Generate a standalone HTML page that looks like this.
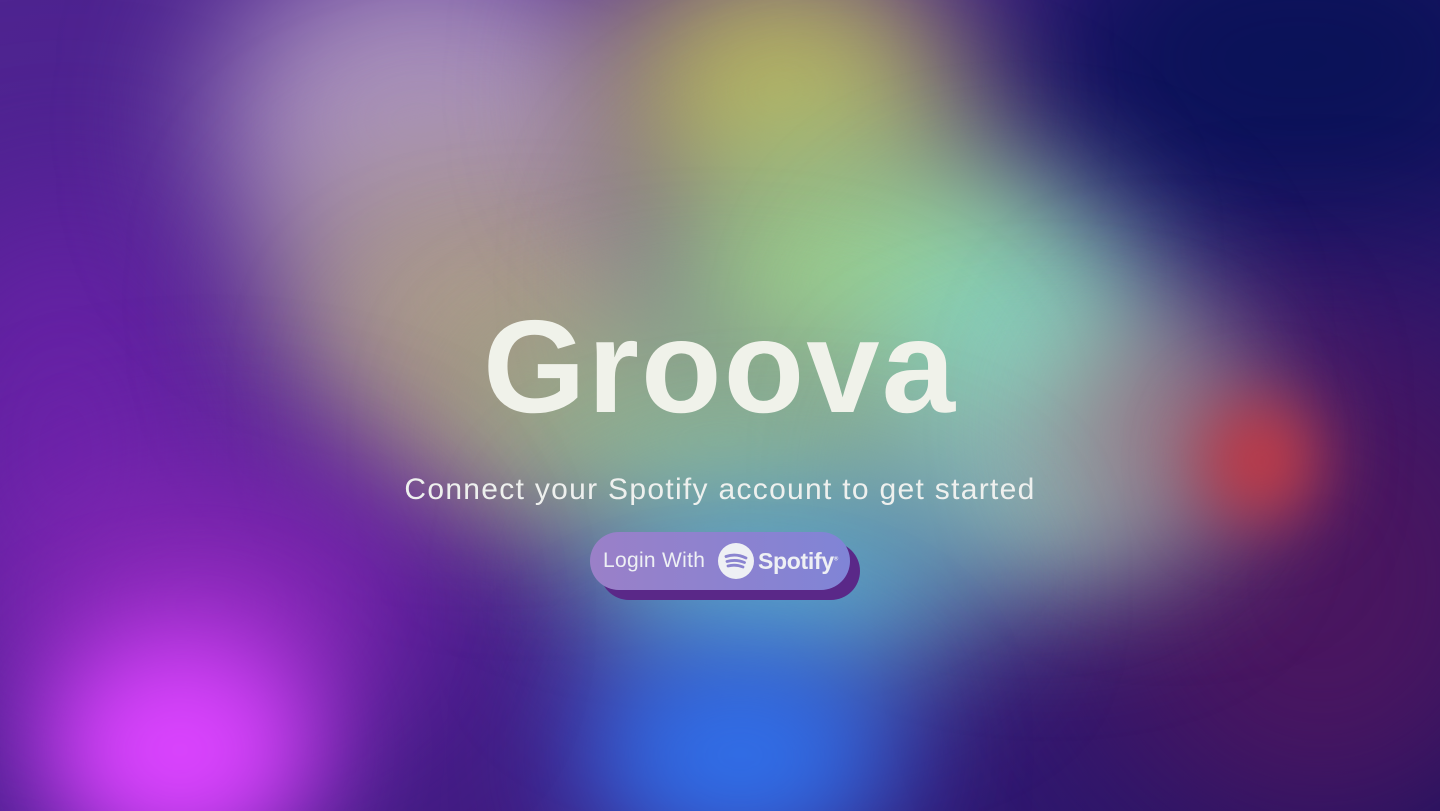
<!DOCTYPE html>
<html><head><meta charset="utf-8"><style>
html,body{margin:0;width:1440px;height:811px;overflow:hidden}
#w{position:absolute;left:0;top:0;width:1440px;height:811px;overflow:hidden;background:linear-gradient(135deg,#4e2490 0%,#4a1e90 40%,#3a1a78 70%,#1a1260 100%);font-family:"Liberation Sans",sans-serif}
.b{position:absolute;border-radius:50%;filter:blur(70px)}
.t{position:absolute;left:0;width:1440px;text-align:center;color:#f0f2ea}
</style></head><body><div id="w">
<div class="b" style="left:1000px;top:-150px;width:600px;height:420px;background:#0a1258;filter:blur(90px)"></div>
<div class="b" style="left:1080px;top:320px;width:480px;height:520px;background:#4a1660;filter:blur(90px)"></div>
<div class="b" style="left:-100px;top:200px;width:330px;height:500px;background:#6a22a8;filter:blur(90px)"></div>
<div class="b" style="left:210px;top:-60px;width:420px;height:360px;background:#a890bc"></div>
<div class="b" style="left:280px;top:150px;width:380px;height:300px;background:#ab9a90"></div>
<div class="b" style="left:380px;top:300px;width:300px;height:200px;background:#a89a80"></div>
<div class="b" style="left:600px;top:-60px;width:360px;height:300px;background:#b4b060"></div>
<div class="b" style="left:650px;top:130px;width:420px;height:300px;background:#9ccc88"></div>
<div class="b" style="left:860px;top:220px;width:320px;height:300px;background:#86d8c0"></div>
<div class="b" style="left:500px;top:330px;width:440px;height:220px;background:#92b890"></div>
<div class="b" style="left:900px;top:380px;width:300px;height:200px;background:#90b4b0"></div>
<div class="b" style="left:1080px;top:330px;width:180px;height:200px;background:#a07080"></div>
<div class="b" style="left:580px;top:490px;width:400px;height:190px;background:#60b4cc"></div>
<div class="b" style="left:1200px;top:400px;width:120px;height:120px;background:#c43a44;filter:blur(35px)"></div>
<div class="b" style="left:580px;top:640px;width:320px;height:230px;background:#3070ea;filter:blur(60px)"></div>
<div class="b" style="left:0px;top:480px;width:420px;height:250px;background:#8a28b8;filter:blur(80px)"></div>
<div class="b" style="left:40px;top:630px;width:280px;height:240px;background:#dc44ff;filter:blur(55px)"></div>
<div class="t" style="top:292px;font-size:132px;font-weight:bold;line-height:150px;letter-spacing:2px">Groova</div>
<div class="t" style="top:472px;font-size:30px;line-height:36px;letter-spacing:1.3px;color:#eef0ee">Connect your Spotify account to get started</div>
<div style="position:absolute;left:600px;top:542px;width:260px;height:58px;border-radius:29px;background:#5a2888"></div>
<div style="position:absolute;left:590px;top:532px;width:260px;height:58px;border-radius:29px;background:linear-gradient(90deg,#9a80c8,#8084d6);color:#eef0f4">
<span style="position:absolute;left:13px;top:17px;font-size:21px;letter-spacing:0.3px">Login With</span>
<svg style="position:absolute;left:128px;top:11px" width="36" height="36" viewBox="0 0 36 36"><circle cx="18" cy="18" r="18" fill="#eef0f4"/><path d="M8 13.5 Q18 10 28 15 M9 18.5 Q18 16 26.5 19.5 M10 23 Q17.5 21 25 24" stroke="#8a84d0" stroke-width="2.8" fill="none" stroke-linecap="round"/></svg>
<span style="position:absolute;left:168px;top:16px;font-size:23px;font-weight:bold;letter-spacing:-0.3px">Spotify<sup style="font-size:6px">®</sup></span>
</div>
</div></body></html>
